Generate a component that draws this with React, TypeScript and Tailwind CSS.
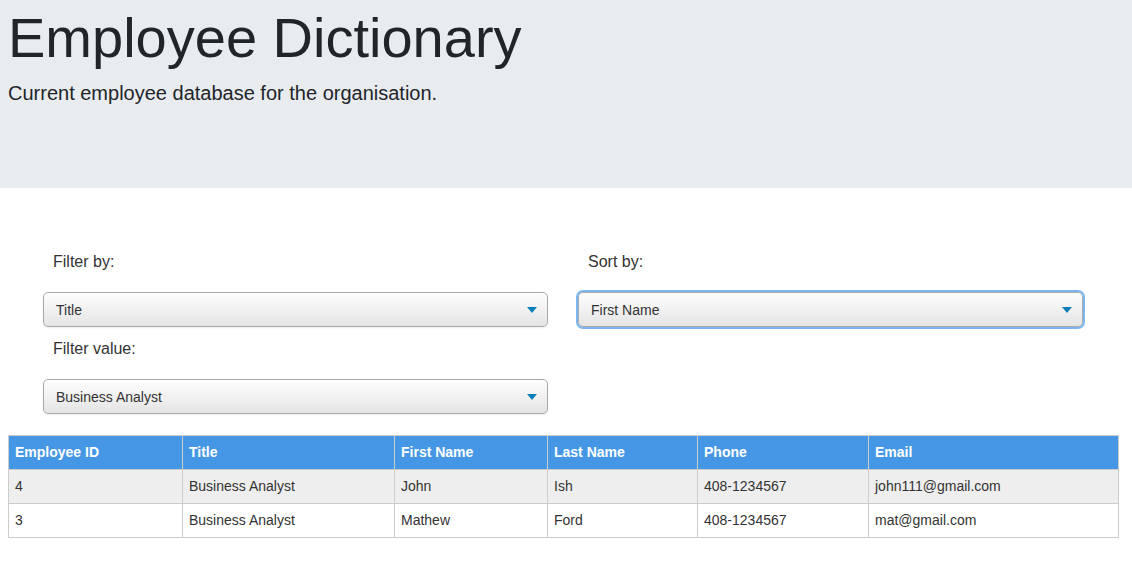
import React from "react";

const rows = [
  { id: "4", title: "Business Analyst", first: "John", last: "Ish", phone: "408-1234567", email: "john111@gmail.com" },
  { id: "3", title: "Business Analyst", first: "Mathew", last: "Ford", phone: "408-1234567", email: "mat@gmail.com" },
];

const cols = [
  { label: "Employee ID", w: "w-[174px]" },
  { label: "Title", w: "w-[212px]" },
  { label: "First Name", w: "w-[153px]" },
  { label: "Last Name", w: "w-[150px]" },
  { label: "Phone", w: "w-[171px]" },
  { label: "Email", w: "w-[250px]" },
];

function Dropdown({ value, focused }: { value: string; focused?: boolean }) {
  return (
    <div
      className={
        "flex h-[35px] w-[505px] items-center justify-between rounded-[5px] border border-[#aaaaaa] bg-gradient-to-b from-[#fefefe] to-[#e4e4e4] pl-3 pr-[10px] text-[14px] text-[#333] shadow-[0_1px_2px_rgba(0,0,0,0.08)]" +
        (focused ? " outline-2 outline-[#7db6ee] outline-offset-0" : "")
      }
    >
      <span>{value}</span>
      <svg width="10" height="6" viewBox="0 0 10 6">
        <path d="M0 0 H10 L5 6 Z" fill="#0f7db8" />
      </svg>
    </div>
  );
}

export default function App() {
  return (
    <div className="min-h-[561px] bg-white font-['Liberation_Sans',Arial,sans-serif] text-[#212529]">
      <header className="h-[188px] bg-[#e9ecef] px-2 pt-[4px]">
        <h1 className="text-[56px] leading-[1.2]">Employee Dictionary</h1>
        <p className="mt-[7px] text-[20px] leading-[1.5]">Current employee database for the organisation.</p>
      </header>

      <div className="grid grid-cols-[505px_505px] gap-x-[30px] pl-[43px] pt-[62px] text-[16px] leading-[24px] text-[#333]">
        <div>
          <div className="pl-[10px]">Filter by:</div>
          <div className="mt-[18px]">
            <Dropdown value="Title" />
          </div>
        </div>
        <div>
          <div className="pl-[10px]">Sort by:</div>
          <div className="mt-[18px]">
            <Dropdown value="First Name" focused />
          </div>
        </div>
        <div className="mt-[10px]">
          <div className="pl-[10px]">Filter value:</div>
          <div className="mt-[18px]">
            <Dropdown value="Business Analyst" />
          </div>
        </div>
      </div>

      <table className="mx-2 mt-[21px] w-[1110px] table-fixed border-collapse text-[14px] text-[#333]">
        <thead>
          <tr className="h-[34px] bg-[#4597e5] text-left text-white">
            {cols.map((c) => (
              <th key={c.label} className={c.w + " border border-[#cccccc] px-[6px] font-bold"}>
                {c.label}
              </th>
            ))}
          </tr>
        </thead>
        <tbody>
          {rows.map((r, i) => (
            <tr key={r.id} className={"h-[34px] " + (i % 2 === 0 ? "bg-[#eeeeee]" : "bg-white")}>
              <td className="border border-[#cccccc] px-[6px]">{r.id}</td>
              <td className="border border-[#cccccc] px-[6px]">{r.title}</td>
              <td className="border border-[#cccccc] px-[6px]">{r.first}</td>
              <td className="border border-[#cccccc] px-[6px]">{r.last}</td>
              <td className="border border-[#cccccc] px-[6px]">{r.phone}</td>
              <td className="border border-[#cccccc] px-[6px]">{r.email}</td>
            </tr>
          ))}
        </tbody>
      </table>
    </div>
  );
}
